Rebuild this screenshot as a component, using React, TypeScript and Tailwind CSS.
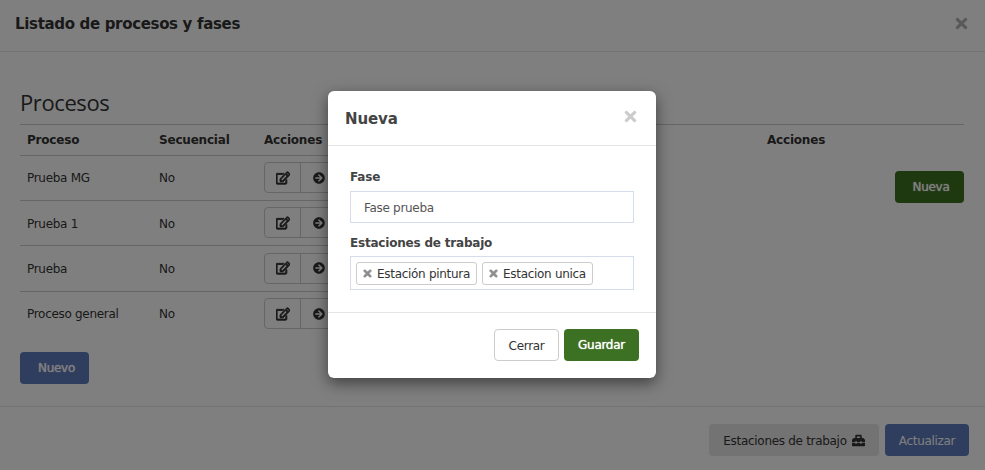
// App.tsx
// Listado de procesos y fases, with the "Nueva" dialog open on top.

import { FaArrowCircleRight, FaRegEdit, FaTimes, FaToolbox } from 'react-icons/fa';

const procesos = ['Prueba MG', 'Prueba 1', 'Prueba', 'Proceso general'];
const rowHeights = ['h-[45px]', 'h-[45px]', 'h-[46px]', 'h-[44px]'];

const Chip = ({ label, width }: { label: string; width: string }) => (
  <div className={`${width} h-[23px] flex items-center pl-[5px] gap-[4px] border border-[#ccc] rounded-[3px] text-[#333]`}>
    <FaTimes size={11} stroke="currentColor" strokeWidth={40} className="text-[#8c8c8c]" />
    <span className="pt-[2px]">{label}</span>
  </div>
);

export default function App() {
  return (
    <div className="relative w-[985px] h-[470px] overflow-hidden bg-white text-[#333] text-[12px] tracking-[-0.3px] font-['DejaVu_Sans',sans-serif]">
      <div className="h-[52px] flex items-center justify-between pl-[15px] pr-[15px] border-b border-[#e5e5e5]">
        <h1 className="text-[15px] font-bold tracking-[-0.33px] -mt-[3px]">Listado de procesos y fases</h1>
        <FaTimes size={17} className="text-[#b3b3b3] -mt-[5px]" />
      </div>

      <div className="h-[354px] pt-[36px] px-[20px]">
        <h2 className="h-[36px] -mt-[1px] mb-[1px] text-[22px] leading-[30px] tracking-[-0.4px] font-normal font-['Open_Sans',sans-serif]">Procesos</h2>
        <div className="flex w-[944px] border-t border-[#ccc]">
          <div className="w-[480px]">
            <div className="h-[31px] flex items-center font-bold tracking-[-0.2px] border-b border-[#ccc]">
              <span className="w-[132px] ml-[7px]">Proceso</span>
              <span className="w-[105px]">Secuencial</span>
              <span>Acciones</span>
            </div>
            {procesos.map((proceso, i) => (
              <div
                key={proceso}
                className={`${rowHeights[i]} flex items-center ${i < 3 ? 'border-b border-[#ccc]' : ''}`}
              >
                <span className={`w-[132px] ml-[7px] ${i === 1 || i === 2 ? 'pt-[1px]' : ''}`}>{proceso}</span>
                <span className={`w-[105px] ${i === 1 ? 'pt-[1px]' : ''}`}>No</span>
                <div className="flex h-[31px] -mt-[1px] border border-[#ccc] rounded-[4px]">
                  <div className="w-[36px] flex items-center justify-center border-r border-[#ccc]">
                    <FaRegEdit size={14} stroke="currentColor" strokeWidth={36} />
                  </div>
                  <div className="w-[36px] flex items-center justify-center">
                    <FaArrowCircleRight size={12} />
                  </div>
                </div>
              </div>
            ))}
            <button className="mt-[16px] w-[69px] h-[32px] pl-[4px] rounded-[4px] bg-[#5e7bbd] text-white [text-shadow:0_0_1px_white]">
              Nuevo
            </button>
          </div>
          <div className="flex-1">
            <div className="h-[30px] flex items-center font-bold tracking-[-0.2px] pl-[267px]">Acciones</div>
            <div className="flex justify-end mt-[16px]">
              <button className="w-[69px] h-[32px] pl-[3px] rounded-[4px] bg-[#3c7220] text-white [text-shadow:0_0_1px_white]">Nueva</button>
            </div>
          </div>
        </div>
      </div>

      <div className="h-[64px] flex items-start justify-end gap-[6px] pt-[17px] pr-[16px] border-t border-[#e5e5e5]">
        <button className="w-[170px] h-[32px] pt-[1px] flex items-center justify-center gap-[5px] rounded-[4px] bg-[#e6e6e6]">
          Estaciones de trabajo <FaToolbox size={13} />
        </button>
        <button className="w-[84px] h-[32px] pt-[1px] rounded-[4px] bg-[#5e7bbd] text-white">Actualizar</button>
      </div>

      <div className="absolute inset-0 bg-black/50" />

      <div className="absolute left-[328px] top-[91px] w-[328px] h-[287px] bg-white rounded-[6px] shadow-[0_5px_15px_rgba(0,0,0,0.5)]">
        <div className="h-[55px] flex items-center justify-between pl-[17px] pr-[17px] border-b border-[#e5e5e5]">
          <h3 className="text-[15px] font-bold tracking-[-0.1px] pt-[3px] text-[#444]">Nueva</h3>
          <FaTimes size={17} className="text-[#ccc] -mt-[4px]" />
        </div>
        <div className="h-[167px] px-[22px] pt-[22px] border-b border-[#e5e5e5]">
          <label className="block h-[23px] font-bold tracking-[-0.2px] text-[#444]">Fase</label>
          <div className="h-[32px] pt-[1px] flex items-center pl-[13px] border border-[#d5dcec] text-[#555]">Fase prueba</div>
          <label className="block h-[20px] mt-[11px] font-bold tracking-[-0.2px] text-[#444]">Estaciones de trabajo</label>
          <div className="h-[34px] mt-[2px] flex items-center gap-[5px] pl-[5px] border border-[#d5dcec]">
            <Chip label="Estación pintura" width="w-[121px]" />
            <Chip label="Estacion unica" width="w-[111px]" />
          </div>
        </div>
        <div className="flex justify-end gap-[5px] pt-[16px] pr-[17px]">
          <button className="w-[65px] h-[32px] pt-[1px] rounded-[4px] border border-[#ccc] bg-white text-[#333]">Cerrar</button>
          <button className="w-[75px] h-[32px] rounded-[4px] bg-[#3c7022] text-white [text-shadow:0_0_1px_white]">Guardar</button>
        </div>
      </div>
    </div>
  );
}
